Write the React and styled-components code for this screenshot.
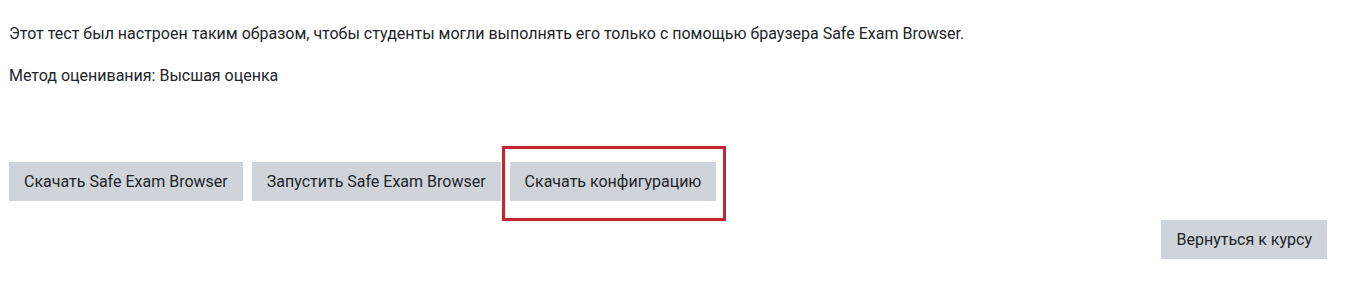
import React from 'react';
import styled, { createGlobalStyle } from 'styled-components';

const GlobalStyle = createGlobalStyle`
  body {
    margin: 0;
    background: #ffffff;
    font-family: Roboto, 'Noto Sans', sans-serif;
    color: #212529;
  }
`;

const Page = styled.main`
  display: flex;
  flex-direction: column;
  padding: 23px 19px 0 9px;
`;

const Text = styled.p`
  margin: 0 0 20px;
  font-size: 16px;
  line-height: 22px;
  color: #212529;
`;

const ButtonRow = styled.div`
  display: flex;
  gap: 9px;
  margin-top: 55px;
`;

const Button = styled.button`
  position: relative;
  height: 39px;
  padding: 0 15px;
  border: none;
  border-radius: 0;
  background: #ced4da;
  color: #212529;
  font-family: Roboto, 'Noto Sans', sans-serif;
  font-size: 16px;
  line-height: 39px;
  white-space: nowrap;
  cursor: pointer;
`;

/* red annotation frame drawn over the highlighted button */
const Highlight = styled.span`
  position: absolute;
  top: -16px;
  left: -8px;
  right: -10px;
  bottom: -20px;
  border: 3px solid #c8242f;
  pointer-events: none;
`;

const Footer = styled.div`
  display: flex;
  justify-content: flex-end;
  margin-top: 19px;
`;

const App = () => {
  return (
    <>
      <GlobalStyle />
      <Page>
        <Text>
          Этот тест был настроен таким образом, чтобы студенты могли выполнять его только с помощью браузера Safe Exam Browser.
        </Text>
        <Text>Метод оценивания: Высшая оценка</Text>
        <ButtonRow>
          <Button>Скачать Safe Exam Browser</Button>
          <Button>Запустить Safe Exam Browser</Button>
          <Button>
            Скачать конфигурацию
            <Highlight />
          </Button>
        </ButtonRow>
        <Footer>
          <Button>Вернуться к курсу</Button>
        </Footer>
      </Page>
    </>
  );
};

export default App;
